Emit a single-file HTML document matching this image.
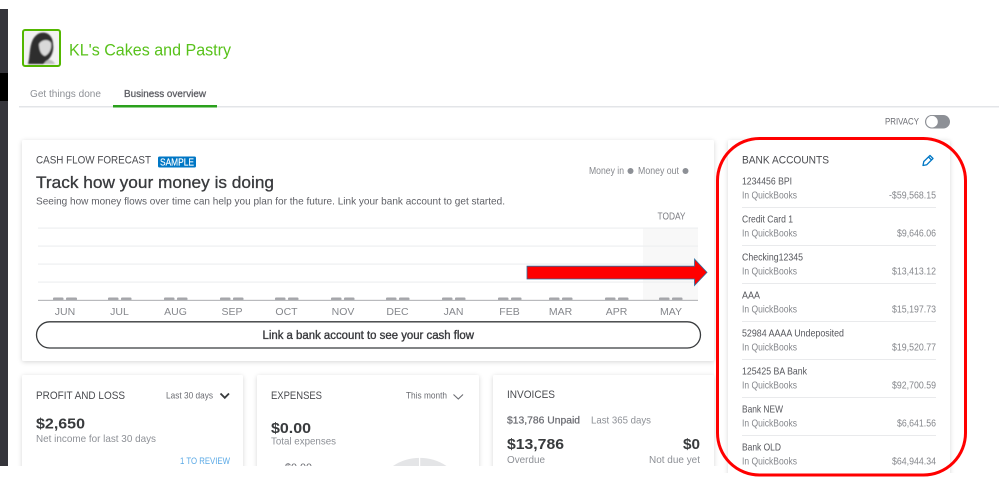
<!DOCTYPE html>
<html><head><meta charset="utf-8"><style>
html,body{margin:0;padding:0;background:#fff;width:999px;height:500px;overflow:hidden}
svg{display:block}
text{font-family:"Liberation Sans",sans-serif;fill:#6b6c72}
.s{font-size:10px;fill:#85878c}
.n{font-size:10.5px;fill:#55565b}
.h{font-size:11px;fill:#4a4b50}
.m{font-size:10.5px;fill:#85878c;text-anchor:middle}
.b{font-weight:bold;fill:#393a3d}
</style></head><body>
<svg width="999" height="500" viewBox="0 0 999 500" xmlns="http://www.w3.org/2000/svg">
<defs>
<filter id="sh" x="-10%" y="-10%" width="120%" height="120%"><feDropShadow dx="0" dy="1" stdDeviation="2.5" flood-color="#000" flood-opacity=".16"/></filter>
<filter id="bl" x="0" y="0" width="100%" height="100%"><feGaussianBlur stdDeviation=".35"/></filter>
<filter id="bl2" x="-10%" y="-10%" width="120%" height="120%"><feGaussianBlur stdDeviation=".9"/></filter>
<clipPath id="left"><rect x="0" y="0" width="999" height="466"/></clipPath>
<clipPath id="bank"><rect x="700" y="100" width="299" height="373"/></clipPath>
<clipPath id="av"><rect x="24" y="31" width="35" height="34"/></clipPath>
</defs>
<g filter="url(#bl)">
<g clip-path="url(#left)">
<rect x="0" y="9" width="8" height="457" fill="#35363a"/>
<rect x="0" y="73" width="8" height="28" fill="#000"/>

<!-- header -->
<rect x="23" y="30" width="37" height="36" rx="2" fill="#f2f2f2" stroke="#53b700" stroke-width="2"/>
<g filter="url(#bl2)" clip-path="url(#av)">
<path d="M28 64 C31 54 28 38 40 33 C48 31 53 37 53 44 C54 50 52 56 48 60 C46 62 44 64 43 64 Z" fill="#2e2e2e"/>
<path d="M39 44 C42 39 49 39 51 43 C52 49 49 54 45 56 C41 55 39 50 39 44 Z" fill="#d9d9d9"/>
<path d="M44 64 C46 59 52 58 55 64 Z" fill="#bdbdbd"/>
</g>
<text x="69" y="55.500" font-size="17" textLength="162" lengthAdjust="spacingAndGlyphs" style="fill:#59c21b">KL's Cakes and Pastry</text>
<text x="30" y="97" font-size="10.500" textLength="71" lengthAdjust="spacingAndGlyphs" style="fill:#8d9096">Get things done</text>
<text x="124" y="97" font-size="10.500" textLength="82" lengthAdjust="spacingAndGlyphs" style="fill:#5c5d63;stroke:#5c5d63;stroke-width:.3">Business overview</text>
<rect x="19" y="106" width="980" height="1.500" fill="#e3e5e8"/>
<rect x="113" y="105" width="104" height="2.500" fill="#2ca01c"/>

<!-- privacy -->
<text x="885" y="124.500" font-size="9.500" textLength="34" lengthAdjust="spacingAndGlyphs" style="fill:#6b6c72">PRIVACY</text>
<rect x="925" y="115" width="25" height="13.500" rx="6.750" fill="#8d9096"/>
<circle cx="932" cy="121.700" r="6.200" fill="#fff" stroke="#8d9096" stroke-width=".8"/>

<!-- cash flow card -->
<rect x="22" y="140" width="692" height="221" rx="2" fill="#fff" filter="url(#sh)"/>
<text x="36" y="163.500" class="h" textLength="115" lengthAdjust="spacingAndGlyphs">CASH FLOW FORECAST</text>
<rect x="158" y="156.500" width="38" height="11" rx="1.500" fill="#0077c5"/>
<text x="160" y="165.500" font-size="10" textLength="34" lengthAdjust="spacingAndGlyphs" style="fill:#fff;stroke:#fff;stroke-width:.15">SAMPLE</text>
<text x="36" y="188" font-size="17" textLength="238" lengthAdjust="spacingAndGlyphs" style="fill:#393a3d;stroke:#393a3d;stroke-width:.3">Track how your money is doing</text>
<text x="36" y="204.500" font-size="10.500" textLength="469" lengthAdjust="spacingAndGlyphs" style="fill:#5f6066">Seeing how money flows over time can help you plan for the future. Link your bank account to get started.</text>
<text x="589" y="174" class="s" font-size="9.500" textLength="35" lengthAdjust="spacingAndGlyphs">Money in</text>
<circle cx="630.500" cy="171" r="3" fill="#8d9096"/>
<text x="638" y="174" class="s" textLength="41" lengthAdjust="spacingAndGlyphs">Money out</text>
<circle cx="685.500" cy="171" r="3" fill="#8d9096"/>
<text x="657.500" y="219.500" font-size="10" textLength="28" lengthAdjust="spacingAndGlyphs" style="fill:#7b7c82">TODAY</text>
<rect x="643" y="228" width="55" height="72" fill="#f8f8f8"/>
<g fill="#eeeff1">
<rect x="38" y="227.500" width="660" height="1.200"/>
<rect x="38" y="245.500" width="660" height="1.200"/>
<rect x="38" y="263.500" width="660" height="1.200"/>
<rect x="38" y="281.500" width="660" height="1.200"/>
</g>
<g fill="#a5a6aa">
<rect x="53" y="297.500" width="10.500" height="3" rx="1"/><rect x="66" y="297.500" width="11" height="3" rx="1"/>
<rect x="108" y="297.500" width="10.500" height="3" rx="1"/><rect x="121" y="297.500" width="10.500" height="3" rx="1"/>
<rect x="164" y="297.500" width="10.500" height="3" rx="1"/><rect x="177" y="297.500" width="10.500" height="3" rx="1"/>
<rect x="220" y="297.500" width="10.500" height="3" rx="1"/><rect x="233" y="297.500" width="10.500" height="3" rx="1"/>
<rect x="275" y="297.500" width="10.500" height="3" rx="1"/><rect x="288" y="297.500" width="10.500" height="3" rx="1"/>
<rect x="331" y="297.500" width="10.500" height="3" rx="1"/><rect x="344" y="297.500" width="10.500" height="3" rx="1"/>
<rect x="386" y="297.500" width="10.500" height="3" rx="1"/><rect x="399" y="297.500" width="10.500" height="3" rx="1"/>
<rect x="442" y="297.500" width="10.500" height="3" rx="1"/><rect x="455" y="297.500" width="10.500" height="3" rx="1"/>
<rect x="498" y="297.500" width="10.500" height="3" rx="1"/><rect x="511" y="297.500" width="10.500" height="3" rx="1"/>
<rect x="549" y="297.500" width="10.500" height="3" rx="1"/><rect x="562" y="297.500" width="10.500" height="3" rx="1"/>
<rect x="605" y="297.500" width="10.500" height="3" rx="1"/><rect x="618" y="297.500" width="10.500" height="3" rx="1"/>
<rect x="659" y="297.500" width="10.500" height="3" rx="1"/><rect x="672" y="297.500" width="10.500" height="3" rx="1"/>
</g>
<rect x="38" y="299.800" width="660" height="1.200" fill="#b9babd"/>
<text class="m" x="65" y="315">JUN</text><text class="m" x="119.500" y="315">JUL</text><text class="m" x="175.500" y="315">AUG</text><text class="m" x="232" y="315">SEP</text><text class="m" x="286.500" y="315">OCT</text><text class="m" x="343" y="315">NOV</text><text class="m" x="397.500" y="315">DEC</text><text class="m" x="453.500" y="315">JAN</text><text class="m" x="509.500" y="315">FEB</text><text class="m" x="560.500" y="315">MAR</text><text class="m" x="616.500" y="315">APR</text><text class="m" x="671" y="315">MAY</text>
<rect x="36.500" y="321.800" width="664" height="26.200" rx="13.100" fill="#fff" stroke="#393a3d" stroke-width="1.300"/>
<text x="262.500" y="339" font-size="11.500" textLength="211.500" lengthAdjust="spacingAndGlyphs" style="fill:#393a3d;stroke:#393a3d;stroke-width:.35">Link a bank account to see your cash flow</text>

<!-- P&L -->
<rect x="22" y="375" width="221" height="110" rx="2" fill="#fff" filter="url(#sh)"/>
<text x="36" y="399" class="h" textLength="89" lengthAdjust="spacingAndGlyphs">PROFIT AND LOSS</text>
<text x="166" y="398.500" font-size="9.500" textLength="47" lengthAdjust="spacingAndGlyphs" style="fill:#6b6c72">Last 30 days</text>
<path d="M220.500 393.500 L224.800 397.800 L229 393.500" fill="none" stroke="#393a3d" stroke-width="1.800"/>
<text x="36" y="428.500" font-size="14.500" textLength="49" lengthAdjust="spacingAndGlyphs" class="b">$2,650</text>
<text x="36" y="442" font-size="10.500" textLength="120" lengthAdjust="spacingAndGlyphs" style="fill:#8d9096">Net income for last 30 days</text>
<text x="180" y="464" font-size="9.500" textLength="50" lengthAdjust="spacingAndGlyphs" style="fill:#5aa9e6">1 TO REVIEW</text>

<!-- Expenses -->
<rect x="257" y="375" width="222" height="110" rx="2" fill="#fff" filter="url(#sh)"/>
<text x="271" y="399" class="h" textLength="51" lengthAdjust="spacingAndGlyphs">EXPENSES</text>
<text x="406" y="398.500" font-size="9.500" textLength="41" lengthAdjust="spacingAndGlyphs" style="fill:#6b6c72">This month</text>
<path d="M453.500 394.500 L458.300 399 L463 394.500" fill="none" stroke="#6b6c72" stroke-width="1.100"/>
<text x="271" y="433" font-size="14.500" textLength="40" lengthAdjust="spacingAndGlyphs" class="b">$0.00</text>
<text x="271" y="444.500" font-size="10.500" textLength="65" lengthAdjust="spacingAndGlyphs" style="fill:#8d9096">Total expenses</text>
<text x="285" y="471" font-size="11" textLength="27" lengthAdjust="spacingAndGlyphs" style="fill:#6b6c72">$0.00</text>
<path d="M393 466 A48 48 0 0 1 446.500 466 Z" fill="#e4e5e7"/>
<rect x="419" y="456" width="1.200" height="10" fill="#fff"/>

<!-- Invoices -->
<rect x="493" y="375" width="221" height="110" rx="2" fill="#fff" filter="url(#sh)"/>
<text x="507" y="398" class="h" textLength="48" lengthAdjust="spacingAndGlyphs">INVOICES</text>
<text x="507" y="423.500" font-size="10.500" textLength="73" lengthAdjust="spacingAndGlyphs" style="fill:#6b6c72;stroke:#6b6c72;stroke-width:.25">$13,786 Unpaid</text>
<text x="591" y="423.500" font-size="10.500" textLength="60" lengthAdjust="spacingAndGlyphs" style="fill:#8d9096">Last 365 days</text>
<text x="507" y="449" font-size="14.500" textLength="57" lengthAdjust="spacingAndGlyphs" class="b">$13,786</text>
<text x="683" y="449" font-size="14.500" textLength="17" lengthAdjust="spacingAndGlyphs" class="b">$0</text>
<text x="507" y="463" font-size="10.500" textLength="38" lengthAdjust="spacingAndGlyphs" style="fill:#8d9096">Overdue</text>
<text x="649" y="463" font-size="10.500" textLength="51" lengthAdjust="spacingAndGlyphs" style="fill:#8d9096">Not due yet</text>
</g>

<!-- Bank accounts -->
<g clip-path="url(#bank)">
<rect x="728" y="140" width="222" height="345" rx="2" fill="#fff" filter="url(#sh)"/>
<text x="742" y="163.500" class="h" textLength="87" lengthAdjust="spacingAndGlyphs">BANK ACCOUNTS</text>
<path d="M923 165.500 L923.800 161.500 L930 155.500 L933 158.500 L926.800 164.700 Z M928.500 157 L931.500 160" fill="none" stroke="#0077c5" stroke-width="1.300" stroke-linejoin="round"/>
<g fill="#e9eaec">
<rect x="742" y="207" width="194" height="1"/><rect x="742" y="245" width="194" height="1"/><rect x="742" y="283" width="194" height="1"/><rect x="742" y="321" width="194" height="1"/><rect x="742" y="359" width="194" height="1"/><rect x="742" y="397" width="194" height="1"/><rect x="742" y="435" width="194" height="1"/>
</g>
<text class="n" x="742" y="184.500" textLength="50" lengthAdjust="spacingAndGlyphs">1234456 BPI</text>
<text class="s" x="742" y="198.500" textLength="55" lengthAdjust="spacingAndGlyphs">In QuickBooks</text>
<text class="s" x="889" y="198.500" textLength="47" lengthAdjust="spacingAndGlyphs">-$59,568.15</text>
<text class="n" x="742" y="222.500" textLength="51" lengthAdjust="spacingAndGlyphs">Credit Card 1</text>
<text class="s" x="742" y="236.500" textLength="55" lengthAdjust="spacingAndGlyphs">In QuickBooks</text>
<text class="s" x="897" y="236.500" textLength="39" lengthAdjust="spacingAndGlyphs">$9,646.06</text>
<text class="n" x="742" y="260.500" textLength="61" lengthAdjust="spacingAndGlyphs">Checking12345</text>
<text class="s" x="742" y="274.500" textLength="55" lengthAdjust="spacingAndGlyphs">In QuickBooks</text>
<text class="s" x="892" y="274.500" textLength="44" lengthAdjust="spacingAndGlyphs">$13,413.12</text>
<text class="n" x="742" y="298.500" textLength="18" lengthAdjust="spacingAndGlyphs">AAA</text>
<text class="s" x="742" y="312.500" textLength="55" lengthAdjust="spacingAndGlyphs">In QuickBooks</text>
<text class="s" x="892" y="312.500" textLength="44" lengthAdjust="spacingAndGlyphs">$15,197.73</text>
<text class="n" x="742" y="336.500" textLength="102" lengthAdjust="spacingAndGlyphs">52984 AAAA Undeposited</text>
<text class="s" x="742" y="350.500" textLength="55" lengthAdjust="spacingAndGlyphs">In QuickBooks</text>
<text class="s" x="892" y="350.500" textLength="44" lengthAdjust="spacingAndGlyphs">$19,520.77</text>
<text class="n" x="742" y="374.500" textLength="65" lengthAdjust="spacingAndGlyphs">125425 BA Bank</text>
<text class="s" x="742" y="388.500" textLength="55" lengthAdjust="spacingAndGlyphs">In QuickBooks</text>
<text class="s" x="892" y="388.500" textLength="44" lengthAdjust="spacingAndGlyphs">$92,700.59</text>
<text class="n" x="742" y="412.500" textLength="41" lengthAdjust="spacingAndGlyphs">Bank NEW</text>
<text class="s" x="742" y="426.500" textLength="55" lengthAdjust="spacingAndGlyphs">In QuickBooks</text>
<text class="s" x="897" y="426.500" textLength="39" lengthAdjust="spacingAndGlyphs">$6,641.56</text>
<text class="n" x="742" y="450.500" textLength="39" lengthAdjust="spacingAndGlyphs">Bank OLD</text>
<text class="s" x="742" y="464.500" textLength="55" lengthAdjust="spacingAndGlyphs">In QuickBooks</text>
<text class="s" x="892" y="464.500" textLength="44" lengthAdjust="spacingAndGlyphs">$64,944.34</text>
</g>
</g>

<!-- annotations -->
<rect x="717.500" y="138.500" width="248" height="336.500" rx="42" fill="none" stroke="#f00" stroke-width="3"/>
<path d="M527 266.200 H694.500 V259 L707 272.400 L694.500 285.500 V279 H527 Z" fill="#f00" stroke="#2f6f9f" stroke-width=".8"/>
</svg>
</body></html>
